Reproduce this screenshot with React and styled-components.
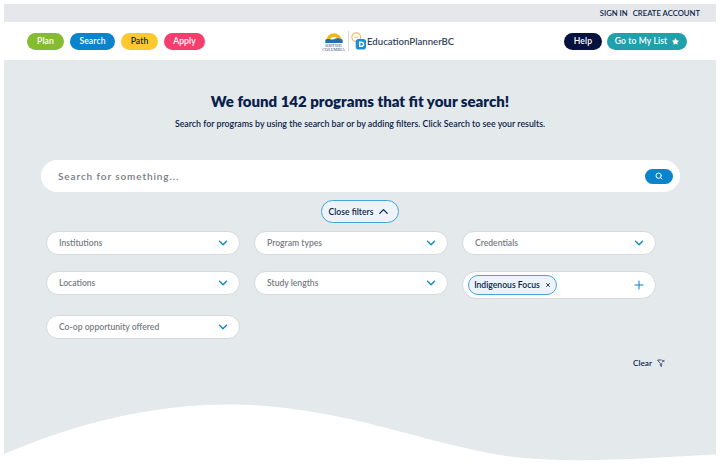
import styled, { createGlobalStyle } from "styled-components";
import { ChevronDown, ChevronUp, FunnelX, Plus, Search, X } from "lucide-react";
import { FaStar } from "react-icons/fa";

const NAVY = "#0b1f4b";
const BLUE = "#0a84cc";
const PANEL = "#e4e9ec";

const GlobalStyle = createGlobalStyle`
  html, body {
    margin: 0;
    padding: 0;
    background: #fff;
  }
  body {
    font-family: Lato, "Open Sans", sans-serif;
    color: ${NAVY};
    height: 472px;
    overflow: hidden;
  }
`;

const Page = styled.div`
  padding: 4px 4px 0;
`;

const TopBar = styled.div`
  height: 18px;
  background: #e5e7eb;
  display: flex;
  align-items: center;
  justify-content: flex-end;
  gap: 5px;
  padding-right: 16px;
`;

const TopLink = styled.a`
  font-size: 7.7px;
  font-weight: 600;
  color: ${NAVY};
`;

const NavBar = styled.div`
  height: 38px;
  display: grid;
  grid-template-columns: 295px auto 1fr;
  align-items: center;
  padding: 0 29px 0 23px;
`;

const PillRow = styled.div`
  display: flex;
  gap: ${(p) => p.$gap || 6}px;
  justify-content: ${(p) => (p.$end ? "flex-end" : "flex-start")};
`;

const Pill = styled.button`
  width: ${(p) => p.$w}px;
  height: 17px;
  padding: 0;
  border: 0;
  border-radius: 9px;
  background: ${(p) => p.$bg};
  color: ${(p) => p.$fg || "#fff"};
  font: 600 8.6px Lato, sans-serif;
  letter-spacing: 0.1px;
  display: flex;
  align-items: center;
  justify-content: center;
  gap: 5px;
`;

const Logo = styled.div`
  display: flex;
  align-items: center;
  width: 134px;
`;

const BcCrest = styled.div`
  width: 23px;
  display: flex;
  flex-direction: column;
  align-items: center;
  font: 4.2px/3.6px "Liberation Serif", serif;
  color: #2b3f6b;
  text-align: center;
`;

const LogoDivider = styled.span`
  width: 1px;
  height: 20px;
  background: #d4d8dc;
  margin: 0 2px 0 3px;
`;

const LogoMark = styled.svg`
  flex: none;
`;

const LogoText = styled.span`
  font-size: 9.6px;
  font-weight: 600;
  color: #38465a;
  white-space: nowrap;
`;

const Main = styled.main`
  background: ${PANEL};
  height: 402px;
  display: flex;
  flex-direction: column;
  align-items: center;
  position: relative;
`;

const Title = styled.h1`
  margin: 31px 0 0;
  font-size: 15px;
  line-height: 20px;
  font-weight: 800;
  color: ${NAVY};
`;

const Subtitle = styled.p`
  margin: 7px 0 0;
  font-size: 8.8px;
  line-height: 12px;
  font-weight: 600;
  color: ${NAVY};
`;

const SearchBar = styled.div`
  margin: 30px 0 0 1px;
  width: 639px;
  height: 32px;
  box-sizing: border-box;
  background: #fff;
  border-radius: 16px;
  display: flex;
  align-items: center;
  justify-content: space-between;
  padding: 0 7px 0 17px;
`;

const Placeholder = styled.span`
  font-size: 10px;
  font-weight: 600;
  letter-spacing: 0.9px;
  color: #777c82;
`;

const SearchButton = styled.button`
  width: 28px;
  height: 15px;
  padding: 0;
  border: 0;
  border-radius: 8px;
  background: ${BLUE};
  color: #fff;
  display: flex;
  align-items: center;
  justify-content: center;
`;

const CloseFilters = styled.button`
  margin: 8px 0 0;
  width: 78px;
  height: 23px;
  padding: 0;
  box-sizing: border-box;
  border: 1px solid #4aa3d8;
  border-radius: 12px;
  background: #ecf4f9;
  color: ${NAVY};
  font: 600 8.6px Lato, sans-serif;
  display: flex;
  align-items: center;
  justify-content: center;
  gap: 3px;
`;

const FilterGrid = styled.div`
  margin: 8px 0 0 -18px;
  width: 610px;
  display: grid;
  grid-template-columns: repeat(3, 193.5px);
  column-gap: 14.5px;
  align-items: start;
`;

const FilterBox = styled.div`
  height: ${(p) => (p.$tall ? 28 : 24)}px;
  margin-bottom: 16px;
  box-sizing: border-box;
  background: #fff;
  border: 1px solid #d5dadd;
  border-radius: 14px;
  display: flex;
  align-items: center;
  justify-content: space-between;
  padding: 0 9px 0 ${(p) => (p.$tall ? 5 : 12)}px;
  font-size: 8.6px;
  font-weight: 600;
  color: ${(p) => (p.$tall ? BLUE : "#777c82")};
`;

const Tag = styled.span`
  width: 89px;
  height: 20px;
  box-sizing: border-box;
  border: 1px solid #4aa3d8;
  border-radius: 10px;
  background: #ecf4f9;
  color: ${NAVY};
  font-size: 8.6px;
  font-weight: 600;
  display: inline-flex;
  align-items: center;
  justify-content: center;
  gap: 5px;
`;

const ClearRow = styled.div`
  width: 619px;
  margin: 3px 0 0 -9px;
  display: flex;
  justify-content: flex-end;
  align-items: center;
  gap: 5px;
  font-size: 8.2px;
  font-weight: 600;
  color: ${NAVY};
`;

const Wave = styled.svg`
  position: absolute;
  left: 0;
  bottom: 0;
  display: block;
`;

const FILTERS = ["Institutions", "Program types", "Credentials", "Locations", "Study lengths"];

function FilterSelect({ label }) {
  return (
    <FilterBox>
      {label}
      <ChevronDown size={14} color={BLUE} strokeWidth={2.2} />
    </FilterBox>
  );
}

export default function App() {
  return (
    <>
      <GlobalStyle />
      <Page>
        <TopBar>
          <TopLink>SIGN IN</TopLink>
          <TopLink>CREATE ACCOUNT</TopLink>
        </TopBar>
        <NavBar>
          <PillRow>
            <Pill $w={37} $bg="#86bc34">Plan</Pill>
            <Pill $w={45} $bg={BLUE}>Search</Pill>
            <Pill $w={37} $bg="#fdc92f" $fg={NAVY}>Path</Pill>
            <Pill $w={41} $bg="#f43f6e">Apply</Pill>
          </PillRow>
          <Logo>
            <BcCrest>
              <svg width="20" height="13" viewBox="0 0 18 12">
                <path d="M2 9a7 7 0 0 1 14 0z" fill="#f6b221" />
                <path d="M5.5 9a3.5 3.5 0 0 1 7 0z" fill="#fff" />
                <path d="M1 8c3-2 5 1 8-.5s5-.5 8 .5v3H1z" fill="#1f6fb2" />
              </svg>
              <span>BRITISH</span>
              <span>COLUMBIA</span>
            </BcCrest>
            <LogoDivider />
            <LogoMark width="16" height="20" viewBox="0 0 17 20">
              <circle cx="5.5" cy="6" r="4.6" fill="none" stroke="#f6b45a" strokeWidth="1.2" />
              <path d="M3.5 6h4" stroke="#f6b45a" strokeWidth="1" />
              <rect x="5" y="8" width="11" height="11" rx="3" fill="#1c8fd6" />
              <path d="M8.5 10.5h2.5a3 3 0 0 1 0 6H8.5z" fill="#fff" />
              <path d="M10 12h1a1.5 1.5 0 0 1 0 3h-1z" fill="#1c8fd6" />
            </LogoMark>
            <LogoText>EducationPlannerBC</LogoText>
          </Logo>
          <PillRow $end $gap={5}>
            <Pill $w={38} $bg="#07123f">Help</Pill>
            <Pill $w={80} $bg="#1fa0aa">
              Go to My List
              <FaStar size={7} />
            </Pill>
          </PillRow>
        </NavBar>
        <Main>
          <Title>We found 142 programs that fit your search!</Title>
          <Subtitle>
            Search for programs by using the search bar or by adding filters. Click Search to see your results.
          </Subtitle>
          <SearchBar>
            <Placeholder>Search for something...</Placeholder>
            <SearchButton aria-label="Search">
              <Search size={8} strokeWidth={3} />
            </SearchButton>
          </SearchBar>
          <CloseFilters>
            Close filters
            <ChevronUp size={15} strokeWidth={2} />
          </CloseFilters>
          <FilterGrid>
            {FILTERS.map((f) => (
              <FilterSelect key={f} label={f} />
            ))}
            <FilterBox $tall>
              <Tag>
                Indigenous Focus
                <X size={6} strokeWidth={3.5} />
              </Tag>
              <Plus size={14} strokeWidth={1.8} />
            </FilterBox>
            <FilterSelect label="Co-op opportunity offered" />
          </FilterGrid>
          <ClearRow>
            Clear
            <FunnelX size={8} strokeWidth={2.2} />
          </ClearRow>
          <Wave width="712" height="60" viewBox="0 0 712 60">
            <path
              d="M0 52C75 20 150 2.5 226 2.5C330 2.5 410 38 496 53C560 63 640 56 712 52.5V60H0Z"
              fill="#fff"
            />
          </Wave>
        </Main>
      </Page>
    </>
  );
}
